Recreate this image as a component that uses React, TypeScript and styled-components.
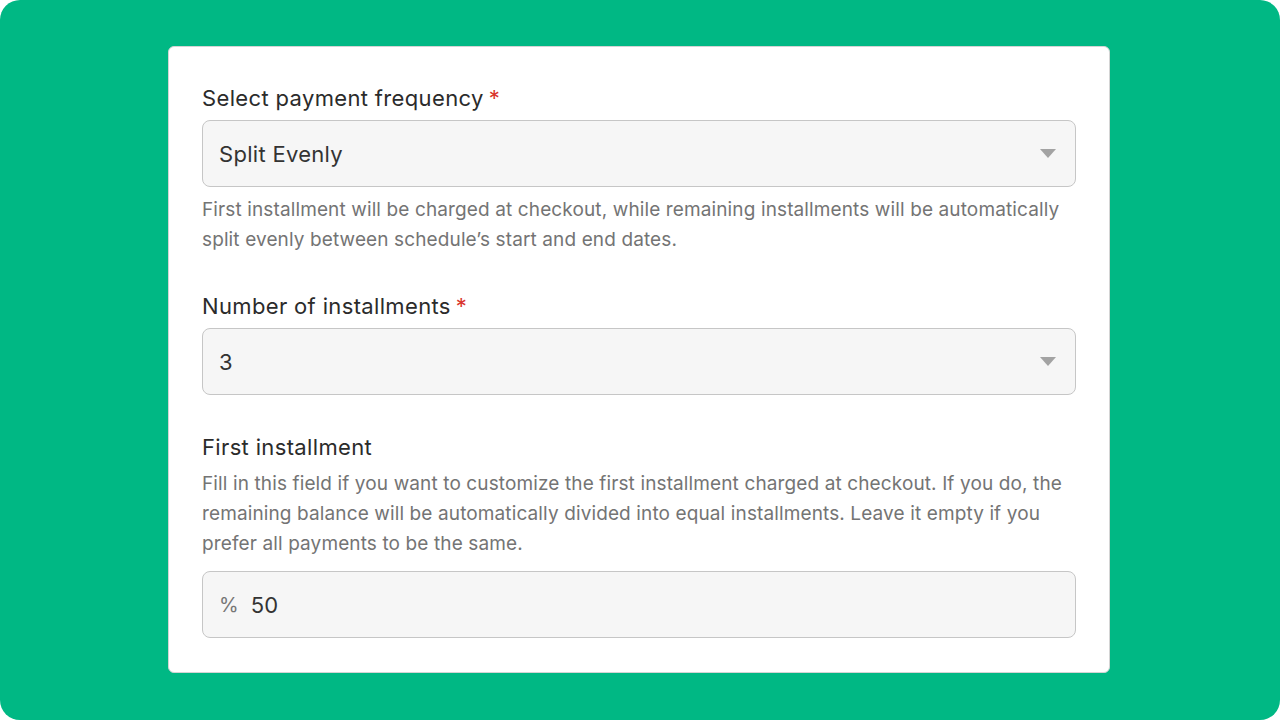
import React from "react";
import styled, { createGlobalStyle } from "styled-components";

const Global = createGlobalStyle`
  html, body { margin: 0; padding: 0; background: #ffffff; }
  body { font-family: Inter, "Noto Sans", sans-serif; }
  * { box-sizing: border-box; }
`;

const Stage = styled.div`
  width: 1280px;
  height: 720px;
  background: #00b884;
  border-radius: 20px;
  padding: 46px 0 0 168px;
`;

const Card = styled.div`
  width: 942px;
  background: #ffffff;
  border: 1px solid #d4d4d4;
  border-radius: 6px;
  padding: 37px 33px 34px 33px;
  display: flex;
  flex-direction: column;
`;

const Field = styled.div<{ $top: number }>`
  display: flex;
  flex-direction: column;
  margin-top: ${(p) => p.$top}px;
`;

const Label = styled.div`
  font-size: 22px;
  line-height: 28px;
  color: #2b2b2b;
  letter-spacing: 0.35px;
`;

const Required = styled.span`
  color: #d9342b;
  margin-left: 5px;
`;

const Helper = styled.p<{ $top: number }>`
  margin: ${(p) => p.$top}px 0 0 0;
  font-size: 19px;
  line-height: 30px;
  color: #747474;
  letter-spacing: 0.12px;
`;

const Box = styled.div<{ $top: number }>`
  margin-top: ${(p) => p.$top}px;
  height: 67px;
  background: #f6f6f6;
  border: 1.5px solid #c6c6c6;
  border-radius: 8px;
  display: flex;
  align-items: center;
  padding: 0 19px 0 16px;
  gap: 12px;
`;

const Value = styled.span`
  flex: 1;
  font-size: 22px;
  color: #333333;
  letter-spacing: 0.3px;
`;

const Prefix = styled.span`
  font-size: 20px;
  color: #767676;
`;

const Caret = () => (
  <svg width="16" height="9" viewBox="0 0 16 9">
    <path d="M0 0 H16 L8 9 Z" fill="#a3a3a3" />
  </svg>
);

export default function App() {
  return (
    <>
      <Global />
      <Stage>
        <Card>
          <Field $top={0}>
            <Label>
              Select payment frequency<Required>*</Required>
            </Label>
            <Box $top={8}>
              <Value>Split Evenly</Value>
              <Caret />
            </Box>
            <Helper $top={8}>
              First installment will be charged at checkout, while remaining installments will be automatically
              split evenly between schedule’s start and end dates.
            </Helper>
          </Field>
          <Field $top={37}>
            <Label>
              Number of installments<Required>*</Required>
            </Label>
            <Box $top={8}>
              <Value>3</Value>
              <Caret />
            </Box>
          </Field>
          <Field $top={38}>
            <Label>First installment</Label>
            <Helper $top={8}>
              Fill in this field if you want to customize the first installment charged at checkout. If you do, the
              remaining balance will be automatically divided into equal installments. Leave it empty if you
              prefer all payments to be the same.
            </Helper>
            <Box $top={12}>
              <Prefix>%</Prefix>
              <Value>50</Value>
            </Box>
          </Field>
        </Card>
      </Stage>
    </>
  );
}
